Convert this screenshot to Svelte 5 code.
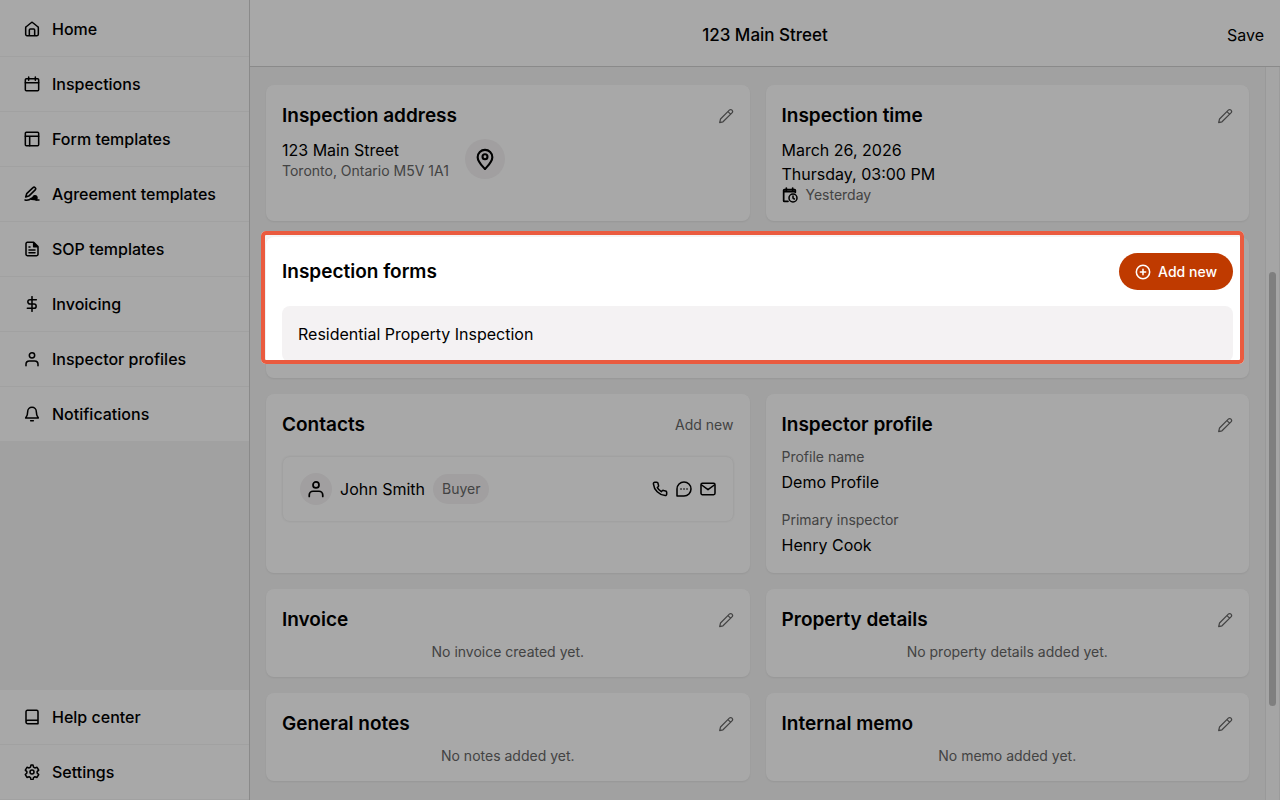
<script>
  const mainNav = [
    { label: 'Home', icon: 'home' },
    { label: 'Inspections', icon: 'calendar' },
    { label: 'Form templates', icon: 'layout' },
    { label: 'Agreement templates', icon: 'sign' },
    { label: 'SOP templates', icon: 'file' },
    { label: 'Invoicing', icon: 'dollar' },
    { label: 'Inspector profiles', icon: 'user' },
    { label: 'Notifications', icon: 'bell' }
  ];
  const footNav = [
    { label: 'Help center', icon: 'book' },
    { label: 'Settings', icon: 'gear' }
  ];
</script>

{#snippet icon(name, size)}
  <svg class="icon" width={size} height={size} viewBox="0 0 24 24" fill="none" stroke="currentColor" stroke-width="2.3" stroke-linecap="round" stroke-linejoin="round" aria-hidden="true">
    {#if name === 'home'}
      <path d="M2.500 10.200a2 2 0 0 1 .8-1.600l7.400-6a2 2 0 0 1 2.600 0l7.400 6a2 2 0 0 1 .8 1.600V20a2 2 0 0 1-2 2h-15a2 2 0 0 1-2-2zM8 22v-8.500A1.500 1.500 0 0 1 9.500 12h5a1.500 1.500 0 0 1 1.500 1.500V22" />
    {:else if name === 'calendar'}
      <rect x="2" y="4" width="20" height="18" rx="1.500" /><path d="M2 10h20M7 1.500v5M17 1.500v5" />
    {:else if name === 'layout'}
      <rect x="2" y="2" width="20" height="20" rx="1.500" /><path d="M2 8h20M8.500 8v14" />
    {:else if name === 'sign'}
      <path d="M2.500 16.500l1.500-5L13.500 2.500a2.300 2.300 0 0 1 3.300 3.300L8 14.500l-5.500 2M1.500 21c4 .8 7-.2 9.500-2.500M18 21h4.500" />
      <path d="M11 20l4-5a3 3 0 0 1 4.500 2.500l-.5 3z" fill="currentColor" />
    {:else if name === 'file'}
      <path d="M14.500 2H5a2 2 0 0 0-2 2v16a2 2 0 0 0 2 2h14a2 2 0 0 0 2-2V8.500zM14.500 2v6.500H21M7.500 9H9M7.500 13.500h9M7.500 17.500h9" />
      <path d="M14.500 2v6.500H21z" fill="currentColor" stroke="none" />
    {:else if name === 'dollar'}
      <path d="M12 1v22M18.500 5.500H9a3.250 3.250 0 0 0 0 6.500h6a3.250 3.250 0 0 1 0 6.500H5" />
    {:else if name === 'user'}
      <circle cx="12" cy="6.500" r="4" /><path d="M3 22v-2a5 5 0 0 1 5-5h8a5 5 0 0 1 5 5v2" />
    {:else if name === 'bell'}
      <path d="M18.500 8.500a6.500 6.500 0 0 0-13 0c0 6.500-2.500 8.500-3 9.500h19c-.5-1-3-3-3-9.500M10 22h4" />
    {:else if name === 'book'}
      <path d="M21 17H5.500A2.500 2.500 0 0 0 3 19.500V4a2 2 0 0 1 2-2h14a2 2 0 0 1 2 2v18H5.500A2.500 2.500 0 0 1 3 19.500" />
    {:else if name === 'gear'}
      <path d="M10.500 1.500h3l.8 3.200 2 1.200 3.200-1 1.500 2.600 1 1.700-2.300 2.300v2l2.300 2.300-2.500 4.300-3.200-1-2 1.200-.8 3.200h-3l-.8-3.200-2-1.200-3.200 1L2 15.800l2.300-2.300v-2L2 9.200l2.500-4.300 3.200 1 2-1.200z" /><circle cx="12" cy="12" r="3" />
    {:else if name === 'pencil'}
      <path d="M2.500 22l1.300-5.500L17 3.300a2.700 2.700 0 0 1 4 4L7.500 20.700zM15 5.500l3.800 3.800" stroke-width="1.800" />
    {:else if name === 'pin'}
      <path d="M20 10c0 5-5 9.500-8 13-3-3.500-8-8-8-13a8 8 0 0 1 16 0z" /><circle cx="12" cy="9.500" r="2.700" />
    {:else if name === 'clock'}
      <path d="M9 21.500H3.500a1 1 0 0 1-1-1V5a1 1 0 0 1 1-1h15.500a1 1 0 0 1 1 1v3M3 7h17M6.500 1.500v4M16 1.500v4" stroke-width="2.600" /><circle cx="16.500" cy="16.500" r="6" /><path d="M16.500 13.500v3.200l2 1.300" />
    {:else if name === 'plus'}
      <circle cx="12" cy="12" r="10" /><path d="M12 8v8M8 12h8" />
    {:else if name === 'phone'}
      <path d="M22 16.900v3a2 2 0 0 1-2.200 2A19.800 19.800 0 0 1 2.100 4.200 2 2 0 0 1 4.100 2h3a2 2 0 0 1 2 1.700c.1 1 .4 1.900.7 2.800a2 2 0 0 1-.5 2.100L8 9.900a16 16 0 0 0 6 6l1.300-1.300a2 2 0 0 1 2.100-.4c.9.300 1.800.600 2.800.700a2 2 0 0 1 1.800 2z" />
    {:else if name === 'chat'}
      <path d="M1.500 22.500v-10.500A10.500 10.500 0 1 1 12 22.500z" /><path d="M7.500 12h.1M12 12h.1M16.500 12h.1" stroke-width="2.500" />
    {:else if name === 'mail'}
      <rect x="1.500" y="3.500" width="21" height="17" rx="2" /><path d="M2.500 6l9.500 7 9.500-7" />
    {/if}
  </svg>
{/snippet}

{#snippet nav(items)}
  <ul>
    {#each items as item}
      <li><a href="#{item.icon}">{@render icon(item.icon, 16)}<span>{item.label}</span></a></li>
    {/each}
  </ul>
{/snippet}

{#snippet cardHead(title)}
  <div class="head">
    <h2>{title}</h2>
    <button class="edit" aria-label="Edit {title}">{@render icon('pencil', 16)}</button>
  </div>
{/snippet}

<div class="app">
  <nav class="sidebar">
    {@render nav(mainNav)}
    {@render nav(footNav)}
  </nav>
  <div class="page">
    <header>
      <h1>123 Main Street</h1>
      <button class="save">Save</button>
    </header>
    <div class="body">
      <main>
        <section class="card tall">
          {@render cardHead('Inspection address')}
          <div class="address">
            <div>
              <p>123 Main Street</p>
              <p class="muted">Toronto, Ontario M5V 1A1</p>
            </div>
            <button class="round map" aria-label="Open map">{@render icon('pin', 22)}</button>
          </div>
        </section>
        <section class="card tall">
          {@render cardHead('Inspection time')}
          <p class="when">March 26, 2026</p>
          <p>Thursday, 03:00 PM</p>
          <p class="muted relative-day"><span class="day-icon">{@render icon('clock', 16)}</span><span>Yesterday</span></p>
        </section>

        <section class="card wide">
          <div class="head forms-head">
            <h2>Inspection forms</h2>
            <button class="primary">{@render icon('plus', 16)}<span>Add new</span></button>
          </div>
          <a class="form-row" href="#form">Residential Property Inspection</a>
          <div class="spotlight"></div>
        </section>

        <section class="card">
          <div class="head">
            <h2>Contacts</h2>
            <button class="text-button">Add new</button>
          </div>
          <div class="contact">
            <span class="round avatar">{@render icon('user', 18)}</span>
            <span>John Smith</span>
            <span class="tag">Buyer</span>
            <span class="actions">
              <button aria-label="Call">{@render icon('phone', 16)}</button>
              <button aria-label="Message">{@render icon('chat', 16)}</button>
              <button aria-label="Email">{@render icon('mail', 16)}</button>
            </span>
          </div>
        </section>
        <section class="card profile">
          {@render cardHead('Inspector profile')}
          <dl>
            <dt>Profile name</dt>
            <dd>Demo Profile</dd>
            <dt>Primary inspector</dt>
            <dd>Henry Cook</dd>
          </dl>
        </section>

        <section class="card">
          {@render cardHead('Invoice')}
          <p class="empty">No invoice created yet.</p>
        </section>
        <section class="card">
          {@render cardHead('Property details')}
          <p class="empty">No property details added yet.</p>
        </section>
        <section class="card">
          {@render cardHead('General notes')}
          <p class="empty">No notes added yet.</p>
        </section>
        <section class="card">
          {@render cardHead('Internal memo')}
          <p class="empty">No memo added yet.</p>
        </section>
      </main>
      <div class="track"><div class="thumb"></div></div>
    </div>
  </div>
</div>

<style>
  :global(body) { margin: 0; }
  .app {
    display: flex;
    height: 100vh;
    overflow: hidden;
    background: #f4f4f4;
    color: #000;
    font: 16px/24px Inter, sans-serif;
  }
  h1, h2, p, ul, dl, dd { margin: 0; padding: 0; }
  button { font: inherit; color: inherit; background: none; border: 0; padding: 0; }
  a { color: inherit; text-decoration: none; }
  .icon { display: block; flex: none; }

  .sidebar {
    box-sizing: border-box;
    width: 250px;
    flex: none;
    display: flex;
    flex-direction: column;
    justify-content: space-between;
    border-right: 1px solid #d2d2d2;
  }
  ul { list-style: none; background: #fff; }
  ul:first-child { padding-top: 2px; }
  li { border-bottom: 1px solid #f4f4f4; }
  li a { display: flex; align-items: center; gap: 12px; height: 54px; padding: 0 24px; font-weight: 500; }

  .page { flex: 1; min-width: 0; display: flex; flex-direction: column; }
  header {
    display: grid;
    grid-template-columns: 1fr auto 1fr;
    align-items: center;
    height: 67px;
    padding: 4px 16px 0;
    box-sizing: border-box;
    background: #fff;
    border-bottom: 1px solid #d2d2d2;
    flex: none;
  }
  h1 { grid-column: 2; font-size: 17px; line-height: 24px; font-weight: 500; }
  .save { justify-self: end; }

  .body { flex: 1; min-height: 0; display: flex; }
  main {
    flex: 1;
    display: grid;
    grid-template-columns: 1fr 1fr;
    gap: 16px;
    align-content: start;
    padding: 18px 16px;
  }
  .card { background: #fff; border-radius: 8px; padding: 16px; box-shadow: 0 1px 2px #0001; }
  .head { display: flex; align-items: center; justify-content: space-between; height: 30px; }
  h2 { font-size: 19px; line-height: 28px; font-weight: 600; }
  .edit { color: #666; }
  .tall { min-height: 104px; }
  .muted, .empty, .text-button, dt, .tag { color: #666; font-size: 14px; line-height: 18px; }
  .address { display: flex; align-items: center; gap: 16px; margin-top: 7px; }
  .round { display: grid; place-items: center; border-radius: 50%; background: #f4f2f3; }
  .map { width: 40px; height: 40px; }
  .when { margin-top: 7px; }
  .relative-day { display: flex; align-items: center; gap: 8px; }
  .day-icon { color: #000; }

  .wide { grid-column: 1 / -1; position: relative; }
  .forms-head { height: 37px; }
  .primary {
    display: flex;
    align-items: center;
    gap: 7px;
    height: 37px;
    padding: 0 16px;
    border-radius: 19px;
    background: #bf3a00;
    color: #fff;
    font-size: 14px;
    font-weight: 500;
  }
  .form-row { display: block; margin-top: 16px; padding: 16px; border-radius: 8px; background: #f4f2f3; }
  .spotlight {
    position: absolute;
    z-index: 10;
    inset: -6px 5px 14px -5px;
    border: 4px solid #ea5b3f;
    border-radius: 5px;
    box-shadow: 0 0 0 200vmax rgba(0, 0, 0, 0.34);
    pointer-events: none;
  }

  .contact {
    display: flex;
    align-items: center;
    gap: 8px;
    margin: 16px 0 35px;
    padding: 16px 17px;
    border: 1px solid #f4f4f4;
    border-radius: 8px;
    box-shadow: 0 0 2px #0001;
  }
  .avatar { width: 32px; height: 32px; }
  .tag { padding: 6px 9px; border-radius: 15px; background: #f4f2f3; }
  .actions { display: flex; gap: 8px; margin-left: auto; }
  dl { margin-top: 8px; }
  dd { margin: 4px 0 17px; }
  .profile dd:last-child { margin-bottom: 0; }
  .empty { margin-top: 8px; text-align: center; }

  .track { box-sizing: border-box; width: 15px; flex: none; padding: 205px 3px 0; border-left: 1px solid #e8e8e8; border-right: 1px solid #ececec; background: #fafafa; }
  .thumb { height: 434px; border-radius: 4px; background: #c1c1c1; }
</style>
